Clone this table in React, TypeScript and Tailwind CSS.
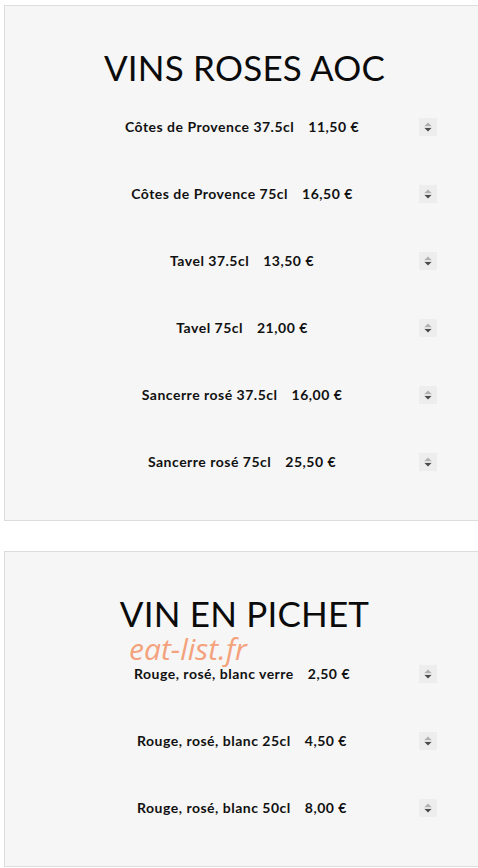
import { ReactNode } from "react";

const roses = [
  { name: "Côtes de Provence 37.5cl", price: "11,50 €" },
  { name: "Côtes de Provence 75cl", price: "16,50 €" },
  { name: "Tavel 37.5cl", price: "13,50 €" },
  { name: "Tavel 75cl", price: "21,00 €" },
  { name: "Sancerre rosé 37.5cl", price: "16,00 €" },
  { name: "Sancerre rosé 75cl", price: "25,50 €" },
];

const pichet = [
  { name: "Rouge, rosé, blanc verre", price: "2,50 €" },
  { name: "Rouge, rosé, blanc 25cl", price: "4,50 €" },
  { name: "Rouge, rosé, blanc 50cl", price: "8,00 €" },
];

function Sorter() {
  return (
    <span className="flex h-[18px] w-[18px] items-center justify-center bg-[#ededed]">
      <svg width="10" height="12" viewBox="0 0 10 12">
        <path d="M5 1.5 L8.5 5 L1.5 5 Z" fill="#b0b0b0" />
        <path d="M1 6 H9" stroke="#d0d0d0" strokeWidth="0.8" />
        <path d="M5 10.5 L8.5 7 L1.5 7 Z" fill="#4a4a4a" />
      </svg>
    </span>
  );
}

function Item({ name, price }: { name: string; price: string }) {
  return (
    <div className="grid h-[67px] grid-cols-[1fr_auto_1fr] items-center">
      <div />
      <p className="whitespace-nowrap text-[14px] font-bold tracking-[0.5px] text-[#111]">
        {name}
        <span className="ml-[14px]">{price}</span>
      </p>
      <div className="flex justify-end pr-[42px]">
        <Sorter />
      </div>
    </div>
  );
}

function Card({ title, children, className }: { title: string; children: ReactNode; className?: string }) {
  return (
    <section className={"ml-1 mr-[-2px] border border-[#dcdcdc] bg-[#f6f6f6] pt-[44px] pb-[25px] " + (className ?? "")}>
      <h2 className="pl-[5px] text-center text-[35px] leading-none tracking-[0.2px] text-[#0b0b0b]">{title}</h2>
      {children}
    </section>
  );
}

export default function App() {
  return (
    <div className="min-h-[868px] overflow-hidden bg-white pt-[5px] font-['Lato','Liberation_Sans',sans-serif]">
      <Card title="VINS ROSES AOC">
        <div className="mt-[8px]">
          {roses.map((r) => (
            <Item key={r.name} {...r} />
          ))}
        </div>
      </Card>

      <Card title="VIN EN PICHET" className="mt-[30px]">
        <div className="relative mt-[9px]">
          <span className="absolute left-[124px] top-[-6px] font-['Open_Sans',sans-serif] text-[30px] italic leading-none text-[#f4a27c]">
            eat-list.fr
          </span>
          {pichet.map((r) => (
            <Item key={r.name} {...r} />
          ))}
        </div>
      </Card>
    </div>
  );
}
